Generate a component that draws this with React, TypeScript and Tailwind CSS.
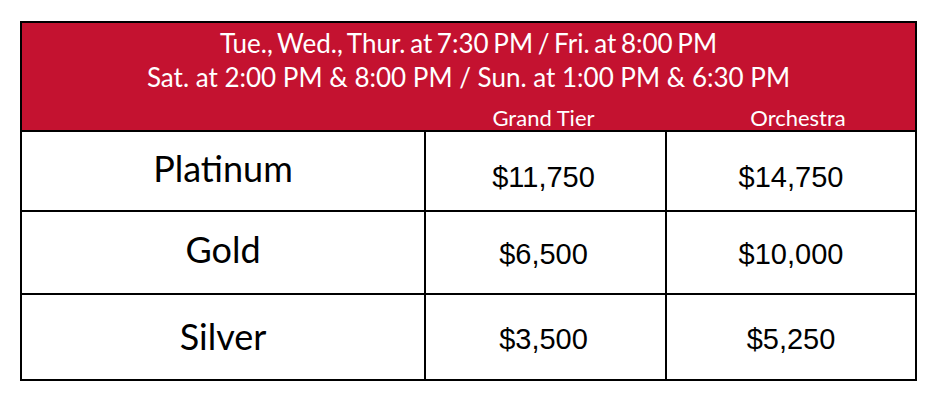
const rows = [
  { tier: "Platinum", grand: "$11,750", orchestra: "$14,750", h: "h-[78px]", label: "pb-[4px]", price: "pt-[14px]" },
  { tier: "Gold", grand: "$6,500", orchestra: "$10,000", h: "h-[83px]", label: "pb-[5px]", price: "pt-[5px]" },
  { tier: "Silver", grand: "$3,500", orchestra: "$5,250", h: "h-[86px]", label: "", price: "pt-[6px]" },
];

export default function App() {
  return (
    <div className="h-[401px] w-[937px] bg-white pl-[20px] pt-[21px]">
      <div className="w-[897px] border-2 border-black">
        {/* Header */}
        <div className="h-[109px] border-b-2 border-black bg-[#c41230] pt-[3px] text-white font-['Lato','Gill_Sans',sans-serif]">
          <p className="text-center text-[26px] leading-[34px] [word-spacing:-2px]">
            Tue., Wed., Thur. at 7:30 PM / Fri. at 8:00 PM
          </p>
          <p className="text-center text-[26px] leading-[34px]">
            Sat. at 2:00 PM &amp; 8:00 PM / Sun. at 1:00 PM &amp; 6:30 PM
          </p>
          <div className="grid h-[36px] grid-cols-[404px_241px_248px] pt-[13px] text-[22px] leading-[22px]">
            <span />
            <span className="pr-[6px] text-center">Grand Tier</span>
            <span className="pl-[14px] text-center">Orchestra</span>
          </div>
        </div>

        {/* Rows */}
        {rows.map((r, i) => (
          <div
            key={r.tier}
            className={`grid grid-cols-[402px_2px_239px_2px_248px] ${r.h} ${i > 0 ? "border-t-2 border-black" : ""}`}
          >
            <div className={`flex items-center justify-center text-[36px] leading-[1.2] text-black font-['Lato',sans-serif] ${r.label}`}>
              {r.tier}
            </div>
            <div className="bg-black" />
            <div className={`flex items-center justify-center pr-[4px] text-[29px] leading-[1.15] text-black font-['Liberation_Sans',Arial,sans-serif] ${r.price}`}>
              {r.grand}
            </div>
            <div className="bg-black" />
            <div className={`flex items-center justify-center text-[29px] leading-[1.15] text-black font-['Liberation_Sans',Arial,sans-serif] ${r.price}`}>
              {r.orchestra}
            </div>
          </div>
        ))}
      </div>
    </div>
  );
}
